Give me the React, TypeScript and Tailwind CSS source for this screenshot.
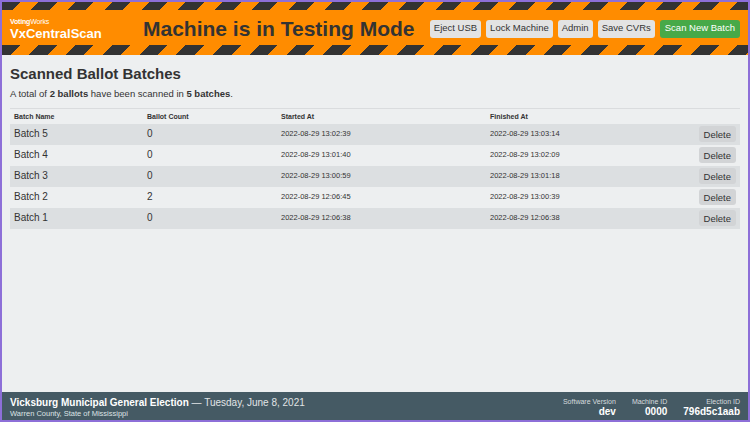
import React from "react";

const batches = [
  { name: "Batch 5", count: 0, started: "2022-08-29 13:02:39", finished: "2022-08-29 13:03:14" },
  { name: "Batch 4", count: 0, started: "2022-08-29 13:01:40", finished: "2022-08-29 13:02:09" },
  { name: "Batch 3", count: 0, started: "2022-08-29 13:00:59", finished: "2022-08-29 13:01:18" },
  { name: "Batch 2", count: 2, started: "2022-08-29 12:06:45", finished: "2022-08-29 13:00:39" },
  { name: "Batch 1", count: 0, started: "2022-08-29 12:06:38", finished: "2022-08-29 12:06:38" },
];

function Stripes({ className }: { className: string }) {
  return (
    <div
      className={
        "w-full bg-[repeating-linear-gradient(135deg,#333_0_13px,#ff8c00_13px_26px)] " +
        className
      }
    />
  );
}

export default function App() {
  return (
    <div className="h-[422px] w-[750px] border-2 border-[#8d6fd8] bg-[#edeff0] flex flex-col overflow-hidden font-['Liberation_Sans',Arial,sans-serif] text-[#333]">
      {/* Header */}
      <header className="bg-[#ff8c00] flex flex-col shrink-0">
        <Stripes className="h-[8px]" />
        <div className="flex items-center h-[35px] px-2 pt-[2px]">
          <div className="flex flex-col w-[133px] text-white leading-none">
            <span className="text-[7px] font-bold tracking-tight">
              Voting<span className="font-normal">Works</span>
            </span>
            <span className="text-[13px] font-bold mt-[2px]">VxCentralScan</span>
          </div>
          <h1 className="text-[21px] font-bold text-[#333] leading-none whitespace-nowrap">Machine is in Testing Mode</h1>
          <div className="ml-auto flex gap-[5px] text-[9.5px] whitespace-nowrap">
            <button className="h-[18px] px-[4px] rounded-[3px] bg-[#e3e3e3] text-[#333]">Eject USB</button>
            <button className="h-[18px] px-[4px] rounded-[3px] bg-[#e3e3e3] text-[#333]">Lock Machine</button>
            <button className="h-[18px] px-[4px] rounded-[3px] bg-[#e3e3e3] text-[#333]">Admin</button>
            <button className="h-[18px] px-[4px] rounded-[3px] bg-[#e3e3e3] text-[#333]">Save CVRs</button>
            <button className="h-[18px] px-[5px] rounded-[3px] bg-[#47a948] text-white">Scan New Batch</button>
          </div>
        </div>
        <Stripes className="h-[10px]" />
      </header>

      {/* Main */}
      <main className="flex-1 px-2 pt-[11px]">
        <h2 className="text-[15px] font-bold leading-none">Scanned Ballot Batches</h2>
        <p className="text-[9.5px] leading-none mt-[8px]">
          A total of <strong>2 ballots</strong> have been scanned in <strong>5 batches</strong>.
        </p>
        <table className="w-full mt-[9px] border-collapse leading-none">
          <thead>
            <tr className="border-t border-[#dadcde] text-left text-[7px] font-bold">
              <th className="pl-1 pt-[4px] pb-[4px] w-[137px]">Batch Name</th>
              <th className="w-[134px]">Ballot Count</th>
              <th className="w-[209px]">Started At</th>
              <th>Finished At</th>
              <th></th>
            </tr>
          </thead>
          <tbody>
            {batches.map((b, i) => (
              <tr key={b.name} className={(i % 2 === 0 ? "bg-[#dcdfe1]" : "bg-[#edeff0]") + " h-[21px]"}>
                <td className="pl-1 p-0 text-[10px]">{b.name}</td>
                <td className="p-0 text-[10px]">{b.count}</td>
                <td className="p-0 text-[7.5px]">{b.started}</td>
                <td className="p-0 text-[7.5px]">{b.finished}</td>
                <td className="p-0 text-right pr-[4px]">
                  <button className="h-[16px] px-[5px] rounded-[3px] bg-[#d2d4d6] text-[9.5px] leading-none text-[#333] align-middle">Delete</button>
                </td>
              </tr>
            ))}
          </tbody>
        </table>
      </main>

      {/* Footer */}
      <footer className="h-[28px] bg-[#455a64] text-white flex items-center px-2 pt-[3px] shrink-0">
        <div className="flex flex-col leading-none">
          <span className="text-[10px]">
            <strong>Vicksburg Municipal General Election</strong>
            <span className="text-[#e0e4e6]"> — Tuesday, June 8, 2021</span>
          </span>
          <span className="text-[7.5px] mt-[2px] text-[#dde2e4]">Warren County, State of Mississippi</span>
        </div>
        <div className="ml-auto flex gap-[16px] text-right leading-none">
          <div className="flex flex-col">
            <span className="text-[7px] text-[#d5dbde]">Software Version</span>
            <strong className="text-[10px] mt-[2px]">dev</strong>
          </div>
          <div className="flex flex-col">
            <span className="text-[7px] text-[#d5dbde]">Machine ID</span>
            <strong className="text-[10px] mt-[2px]">0000</strong>
          </div>
          <div className="flex flex-col">
            <span className="text-[7px] text-[#d5dbde]">Election ID</span>
            <strong className="text-[10px] mt-[2px]">796d5c1aab</strong>
          </div>
        </div>
      </footer>
    </div>
  );
}
